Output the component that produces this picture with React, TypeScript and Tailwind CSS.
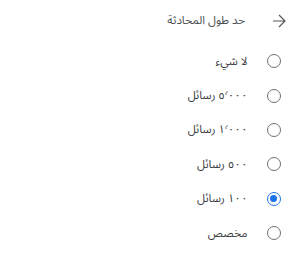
import React, { useState } from 'react';

const options = [
  { id: 'none', label: 'لا شيء' },
  { id: '5000', label: '٥٬٠٠٠ رسائل' },
  { id: '1000', label: '١٬٠٠٠ رسائل' },
  { id: '500', label: '٥٠٠ رسائل' },
  { id: '100', label: '١٠٠ رسائل' },
  { id: 'custom', label: 'مخصص' },
];

const Radio = ({ checked }: { checked: boolean }) => (
  <span
    className={`flex h-[14px] w-[14px] shrink-0 items-center justify-center rounded-full border-[1.5px] ${
      checked ? 'border-[#1a73e8]' : 'border-[#707070]'
    }`}
  >
    {checked && <span className="h-[7px] w-[7px] rounded-full bg-[#1a73e8]" />}
  </span>
);

export default function App() {
  const [value, setValue] = useState('100');

  return (
    <div
      dir="rtl"
      className="h-[259px] w-[300px] overflow-hidden bg-white"
      style={{ fontFamily: '"Noto Sans Arabic", "Noto Sans", sans-serif' }}
    >
      {/* header */}
      <div className="flex h-[44px] items-center gap-[27px] pb-[3px] pr-[14px]">
        <svg width="14" height="14" viewBox="0 0 14 14" fill="none" stroke="#555" strokeWidth="1.2">
          <path d="M1 7h12M7 1l6 6-6 6" />
        </svg>
        <span className="text-[11.5px] text-[#4a4d51]">حد طول المحادثة</span>
      </div>
      {/* options */}
      <div className="flex flex-col">
        {options.map((o) => (
          <button
            key={o.id}
            onClick={() => setValue(o.id)}
            className="flex h-[34.4px] items-center gap-[19px] pr-[19.5px] text-right"
          >
            <Radio checked={value === o.id} />
            <span className="text-[11.5px] text-[#3c4043]">{o.label}</span>
          </button>
        ))}
      </div>
    </div>
  );
}
